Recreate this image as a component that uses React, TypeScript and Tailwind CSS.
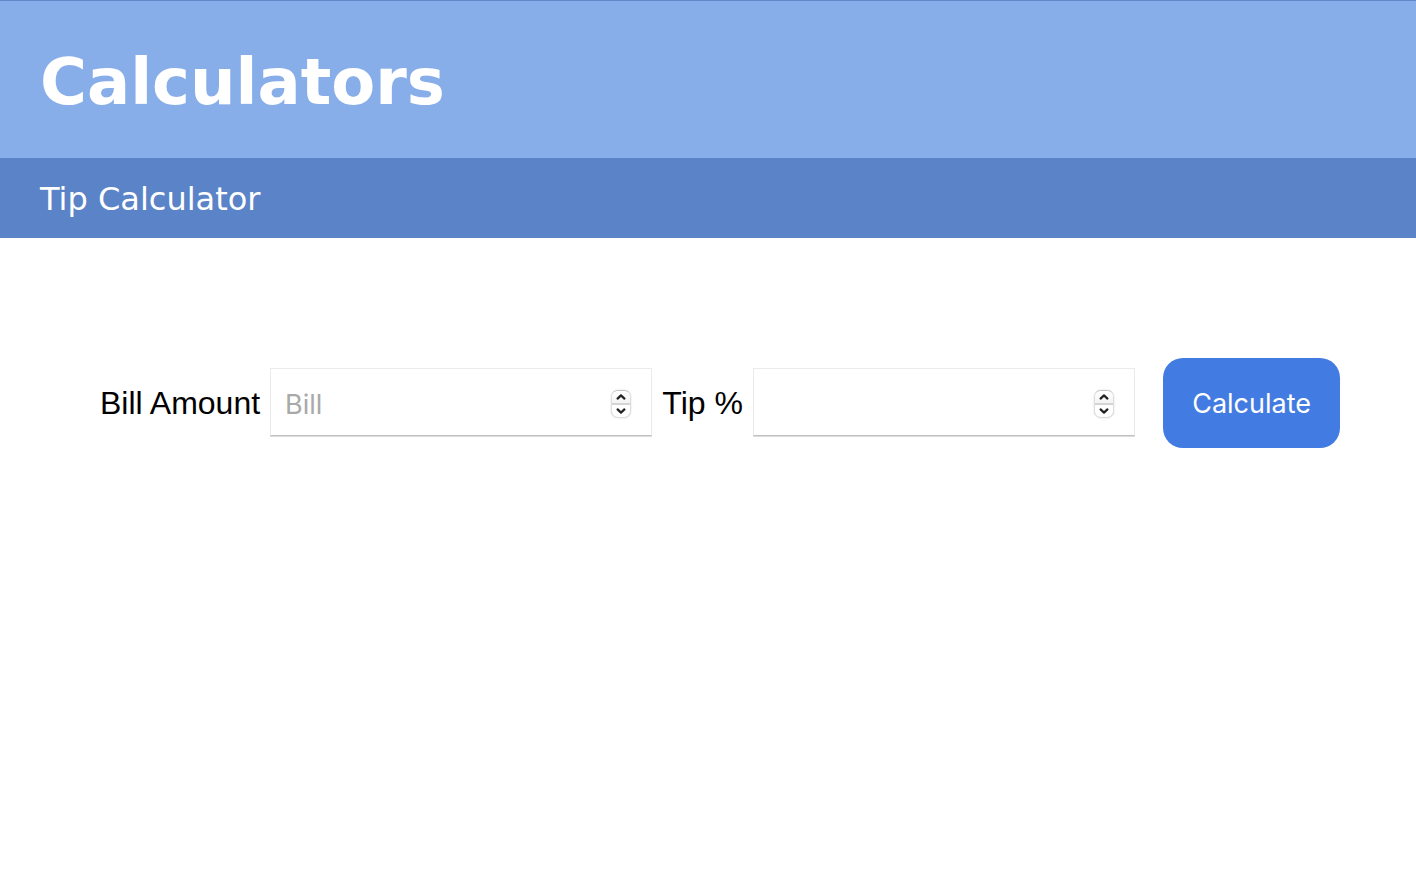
import { useRef, useState } from 'react';
import type { FormEvent } from 'react';

type NumberFieldProps = {
  id: string;
  label: string;
  placeholder?: string;
};

function Chevron({ up }: { up: boolean }) {
  return (
    <svg
      viewBox="0 0 10 6"
      className="h-[6px] w-[10px]"
      fill="none"
      stroke="#222222"
      strokeWidth="2.2"
      strokeLinecap="round"
      strokeLinejoin="round"
      aria-hidden="true"
    >
      <path d={up ? 'M1.6 4.6 L5 1.4 L8.4 4.6' : 'M1.6 1.4 L5 4.6 L8.4 1.4'} />
    </svg>
  );
}

function NumberField({ id, label, placeholder }: NumberFieldProps) {
  const input = useRef<HTMLInputElement>(null);

  return (
    <>
      <label htmlFor={id} className="shrink-0 whitespace-nowrap text-[32px] leading-9 text-black">
        {label}
      </label>
      <div className="relative min-w-0 flex-1 pb-0.5">
        <input
          ref={input}
          id={id}
          name={id}
          type="number"
          placeholder={placeholder}
          className="block h-[68px] w-full appearance-none border border-[#ebebeb] border-b-[#c0c0c0] bg-white pt-1 pr-12 pl-[14px] font-['Inter',sans-serif] text-[27px] leading-8 text-black shadow-[0_1px_0_#dcdcdc] outline-none [-moz-appearance:textfield] placeholder:text-[#a9a9a9] placeholder:opacity-100 [&::-webkit-inner-spin-button]:appearance-none [&::-webkit-outer-spin-button]:appearance-none"
        />
        <div className="absolute inset-y-0 right-[21px] flex items-center pt-0.5">
          <div className="flex h-7 w-5 flex-col overflow-hidden rounded-[7px] border border-[#dedede] border-t-[#c4c4c4] bg-white shadow-[0_0_2px_rgba(0,0,0,0.15)]">
            <button
              type="button"
              aria-label={`Increase ${label}`}
              onClick={() => input.current?.stepUp()}
              className="flex flex-1 items-center justify-center border-b-2 border-[#d4d4d4] bg-linear-to-b from-white to-[#f4f4f4]"
            >
              <Chevron up />
            </button>
            <button
              type="button"
              aria-label={`Decrease ${label}`}
              onClick={() => input.current?.stepDown()}
              className="flex flex-1 items-center justify-center"
            >
              <Chevron up={false} />
            </button>
          </div>
        </div>
      </div>
    </>
  );
}

export default function App() {
  const [total, setTotal] = useState<number | null>(null);

  const calculate = (event: FormEvent<HTMLFormElement>) => {
    event.preventDefault();
    const data = new FormData(event.currentTarget);
    const bill = Number(data.get('bill'));
    const tip = Number(data.get('tip'));
    setTotal(bill + (bill * tip) / 100);
  };

  return (
    <div className="min-h-screen bg-white font-['Liberation_Sans',Arial,sans-serif]">
      <header className="font-['DejaVu_Sans',Verdana,sans-serif] text-white">
        <div className="border-t border-[#6089c9] bg-[#88aeea] px-10 pt-[41px] pb-9">
          <h1 className="text-[64px] leading-[80px] font-bold">Calculators</h1>
        </div>
        <div className="bg-[#5b83c7] px-10 pt-[21px] pb-[19px]">
          <h2 className="text-[32px] leading-10">Tip Calculator</h2>
        </div>
      </header>
      <main className="pt-[120px] pr-[76px] pl-[100px]">
        <form onSubmit={calculate} className="flex items-center gap-[10px]">
          <NumberField id="bill" label="Bill Amount" placeholder="Bill" />
          <NumberField id="tip" label="Tip %" />
          <button
            type="submit"
            className="ml-[18px] h-[90px] shrink-0 rounded-[20px] bg-[#427be1] px-[29px] pt-0.5 font-['Inter',sans-serif] text-[27px] leading-8 text-white"
          >
            Calculate
          </button>
        </form>
        {total !== null && <output className="mt-10 block text-[32px]">{total.toFixed(2)}</output>}
      </main>
    </div>
  );
}
